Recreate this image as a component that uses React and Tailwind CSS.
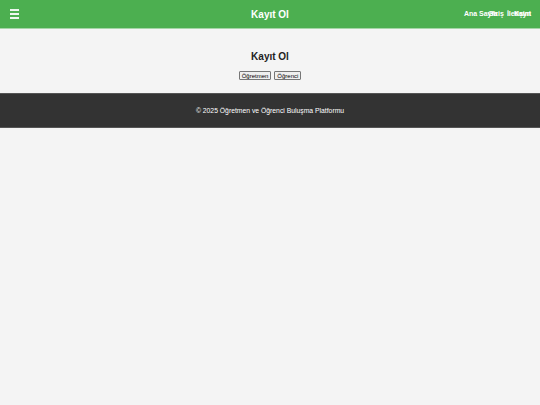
import React from 'react';

const links = [
  { label: 'Ana Sayfa', width: 'w-[24px]' },
  { label: 'Giriş', width: 'w-[19px]' },
  { label: 'İletişim', width: 'w-[7px]' },
  { label: 'Kayıt', width: '' },
];

const App = () => {
  return (
    <div className="min-h-[405px] bg-[#f4f4f4] font-['Liberation_Sans',Arial,sans-serif]">
      {/* Header */}
      <header className="h-[29px] bg-[#4caf50] border-b border-[#a5d6a7] flex items-center pl-[10px] pr-[9px] relative">
        <div className="flex flex-col gap-[2px] w-[9px]">
          <span className="h-[2px] bg-white/90" />
          <span className="h-[2px] bg-white/90" />
          <span className="h-[2px] bg-white/90" />
        </div>
        <h1 className="absolute left-0 right-0 text-center text-white font-bold text-[10px] pointer-events-none">
          Kayıt Ol
        </h1>
        <nav className="ml-auto flex text-white font-bold text-[7px]">
          {links.map((l) => (
            <a key={l.label} href="#" className={`whitespace-nowrap ${l.width}`}>
              {l.label}
            </a>
          ))}
        </nav>
      </header>

      {/* Main */}
      <main className="pt-[23px] pb-[13px] flex flex-col items-center">
        <h2 className="text-[10px] font-bold text-[#222] leading-none">Kayıt Ol</h2>
        <div className="flex gap-[3px] mt-[9px]">
          <button className="text-[6px] leading-none px-[2px] py-[0.5px] bg-[#efefef] border border-[#767676] rounded-[1px] text-black">
            Öğretmen
          </button>
          <button className="text-[6px] leading-none px-[2px] py-[0.5px] bg-[#efefef] border border-[#767676] rounded-[1px] text-black">
            Öğrenci
          </button>
        </div>
      </main>

      {/* Footer */}
      <footer className="h-[35px] bg-[#333] border-y border-[#555] flex items-center justify-center">
        <p className="text-white text-[6.8px] mt-[1px]">© 2025 Öğretmen ve Öğrenci Buluşma Platformu</p>
      </footer>
    </div>
  );
};

export default App;
